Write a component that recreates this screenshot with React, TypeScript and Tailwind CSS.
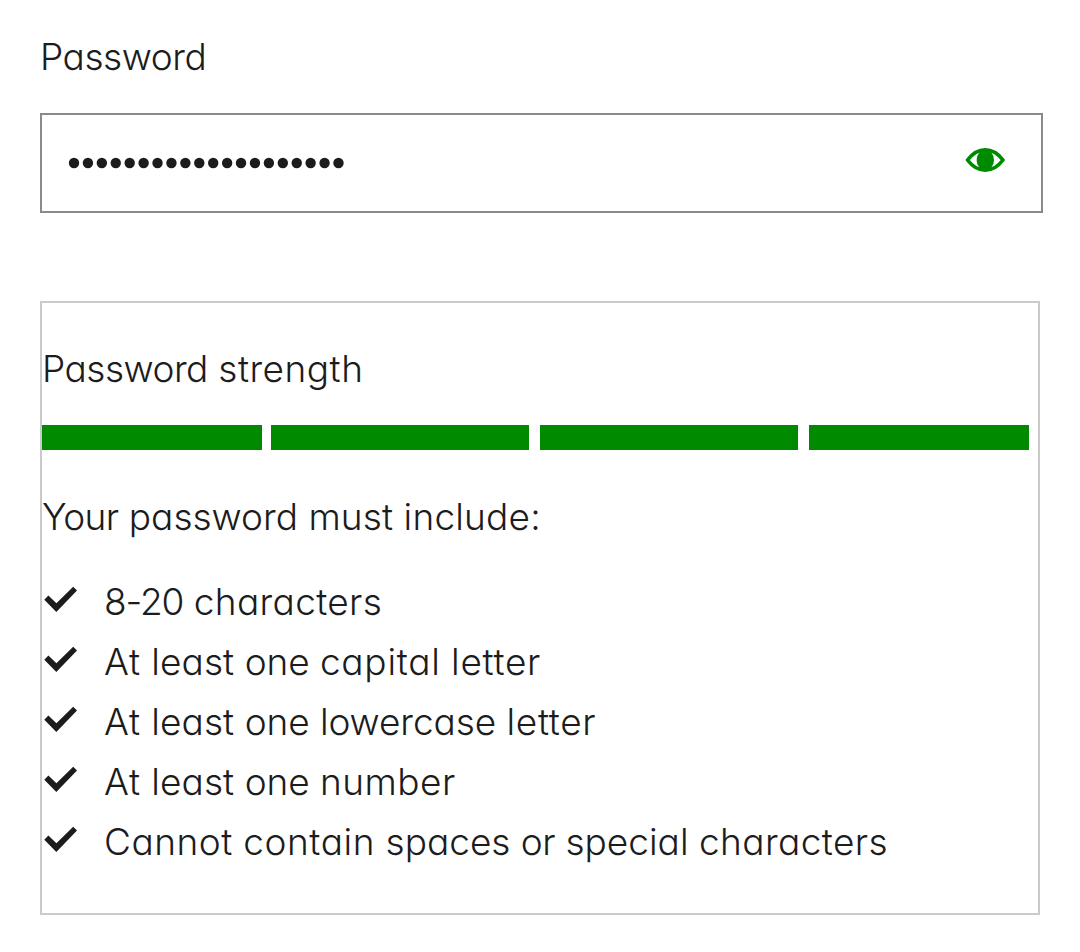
import React from "react";

function Bullets() {
  return (
    <svg width="276" height="12" viewBox="0 0 276 12" fill="#1c1c1c" role="img" aria-label="Hidden password">
      {Array.from({ length: 20 }, (_, i) => (
        <circle key={i} cx={6 + i * 13.92} cy={6} r={5.2} />
      ))}
    </svg>
  );
}

function Eye() {
  return (
    <svg className="mb-[6px]" width="40" height="26" viewBox="0 0 40 26" fill="none">
      <path d="M2.5 13C7 7 12.5 2.8 20.2 2.8C28 2.8 33.5 7 38 13C33.5 19 28 23.2 20.2 23.2C12.5 23.2 7 19 2.5 13Z" stroke="#008a00" strokeWidth="3.7" strokeLinejoin="round" />
      <ellipse cx="20.3" cy="13" rx="8.7" ry="10.4" fill="#008a00" />
    </svg>
  );
}

function Check() {
  return (
    <svg width="34" height="27" viewBox="0 0 34 27" fill="#1c1c1c">
      <path d="M0.3 13.8L4.4 9.6L12.4 17.3L29.2 0.8L33 4.5L12.3 25.9Z" />
    </svg>
  );
}

type Word = [text: string, tracking: string];

function Line({ words }: { words: Word[] }) {
  return (
    <span>
      {words.map(([text, tracking], i) => (
        <React.Fragment key={i}>
          {i > 0 && " "}
          <span className={tracking}>{text}</span>
        </React.Fragment>
      ))}
    </span>
  );
}

const rules: Word[][] = [
  [["8-20", "tracking-[-1.1px]"], ["characters", "tracking-[0.35px]"]],
  [["At", "tracking-[0.7px]"], ["least", "tracking-[0.1px]"], ["one", "tracking-[-0.1px]"], ["capital", "tracking-[0.75px]"], ["letter", "tracking-[0.7px]"]],
  [["At", "tracking-[0.7px]"], ["least", "tracking-[0.1px]"], ["one", "tracking-[-0.1px]"], ["lowercase", "tracking-[-0.1px]"], ["letter", "tracking-[0.7px]"]],
  [["At", "tracking-[0.7px]"], ["least", "tracking-[0.1px]"], ["one", "tracking-[-0.1px]"], ["number", "tracking-[0.5px]"]],
  [["Cannot", "tracking-[0.5px]"], ["contain", "tracking-[0.6px]"], ["spaces", "tracking-[0px]"], ["or", "tracking-[-0.5px]"], ["special", "tracking-[0px]"], ["characters", "tracking-[0.4px]"]],
];

export default function App() {
  return (
    <main className="h-[952px] w-[1080px] bg-white pt-[33px] pl-10 font-['Inter',sans-serif] text-[37px] leading-[48px] font-light text-[#1c1c1c] [font-feature-settings:'cv11']">
      <div className="h-20"><Line words={[["Password", "tracking-[-0.45px]"]]} /></div>
      <div className="flex h-[100px] w-[1003px] items-center justify-between border-2 border-[#8a8a8a] pr-9 pl-[26px]">
        <Bullets />
        <Eye />
      </div>
      <section className="mt-[88px] h-[614px] w-[1000px] border-2 border-[#cacaca] pt-[42px]">
        <div className="h-20"><Line words={[["Password", "tracking-[-0.5px]"], ["strength", "tracking-[0.5px]"]]} /></div>
        <div className="flex h-[25px]">
          <div className="w-[220px] bg-[#008a00]" />
          <div className="ml-[9px] w-[258px] bg-[#008a00]" />
          <div className="ml-[11px] w-[258px] bg-[#008a00]" />
          <div className="ml-[11px] w-[220px] bg-[#008a00]" />
        </div>
        <div className="mt-[43px]">
          <Line words={[["Your", "tracking-[-0.6px]"], ["password", "tracking-[0px]"], ["must", "tracking-[0.15px]"], ["include:", "tracking-[0.2px]"]]} />
        </div>
        <ul className="mt-[37px]">
          {rules.map((words, i) => (
            <li key={i} className="flex h-[60px] items-start">
              <div className="mt-[8px] ml-[2px] w-[60px]"><Check /></div>
              <Line words={words} />
            </li>
          ))}
        </ul>
      </section>
    </main>
  );
}
